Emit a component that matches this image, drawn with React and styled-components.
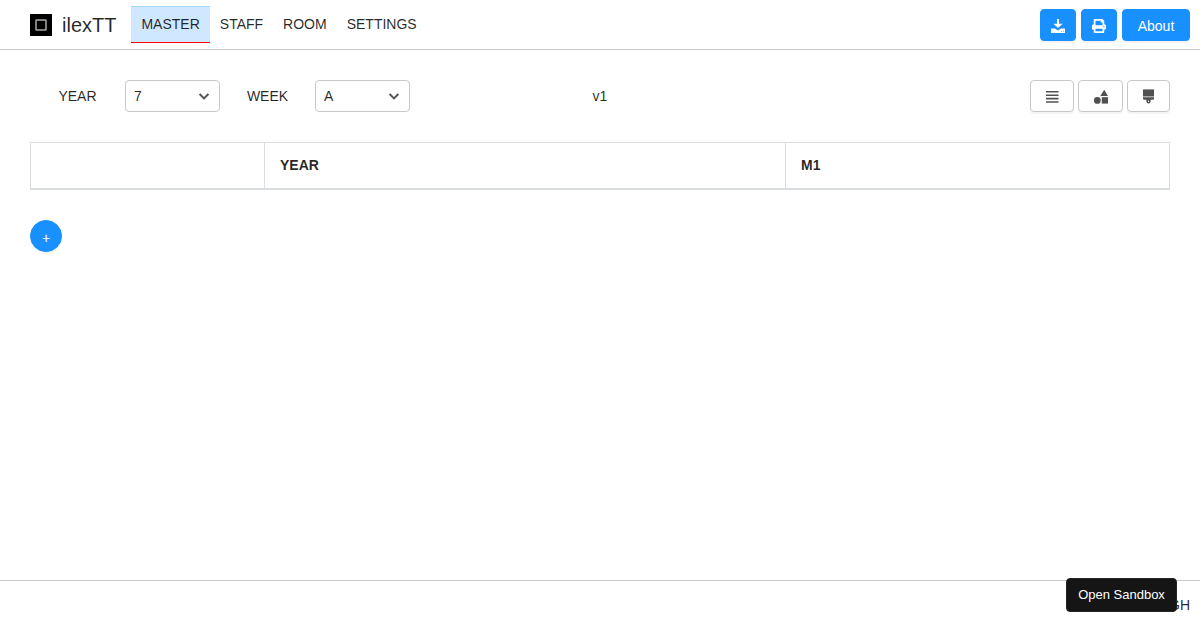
import React, { useState } from "react";
import styled, { createGlobalStyle } from "styled-components";
import { FaPrint } from "react-icons/fa";

const GlobalStyle = createGlobalStyle`
	*,
	*::before,
	*::after {
		box-sizing: border-box;
	}

	:root {
		--blue: #1890ff;
		--text: rgba(0, 0, 0, 0.85);
		--border: #c8c8c8;
		--tableBorder: #d9dddf;
		--icon: #515151;
	}

	body {
		margin: 0;
		color: var(--text);
		background-color: #fff;
		font-family: "Liberation Sans", Arial, sans-serif;
		font-size: 14px;
		line-height: 20px;
	}

	button,
	select {
		font: inherit;
	}
`;

const Page = styled.div`
	min-height: 100vh;
	display: flex;
	flex-direction: column;
`;

const Header = styled.header`
	padding: 0 10px 0 30px;
	height: 50px;
	display: flex;
	align-items: center;
	border-bottom: 1px solid var(--border);
`;

const Brand = styled.a`
	margin-right: 15px;
	display: flex;
	align-items: center;
	gap: 10px;
	font-size: 20px;
	color: inherit;
	text-decoration: none;
`;

const Nav = styled.nav`
	display: flex;
`;

const NavLink = styled.a`
	padding: 7px 10px 8px;
	border-style: solid;
	border-width: 1px 0;
	border-color: ${({ $active }) => ($active ? "#a3d9ff transparent red" : "transparent")};
	background-color: ${({ $active }) => ($active ? "#d0e8ff" : "transparent")};
	background-clip: padding-box;
	color: inherit;
	text-decoration: none;
`;

const Actions = styled.div`
	margin-left: auto;
	display: flex;
	gap: ${({ $gap }) => $gap}px;
`;

const Button = styled.button`
	padding: 2px 0 0;
	width: ${({ $width }) => $width}px;
	height: 32px;
	display: flex;
	align-items: center;
	justify-content: center;
	border: 1px solid ${({ $primary }) => ($primary ? "var(--blue)" : "var(--border)")};
	border-radius: 4px;
	background-color: ${({ $primary }) => ($primary ? "var(--blue)" : "#fff")};
	box-shadow: 0 2px 0 rgba(0, 0, 0, 0.045);
	color: ${({ $primary }) => ($primary ? "#fff" : "var(--icon)")};
	cursor: pointer;
`;

const RoundButton = styled(Button)`
	padding-top: 4px;
	border-radius: 50%;
`;

const Main = styled.main`
	padding: 30px;
	flex: 1;
	display: flex;
	flex-direction: column;
	gap: 30px;
`;

const Toolbar = styled.div`
	display: grid;
	grid-template-columns: 1fr auto 1fr;
	align-items: center;
`;

const Filters = styled.div`
	display: flex;
	align-items: center;
`;

const Label = styled.label`
	width: 95px;
	text-align: center;
`;

const SelectBox = styled.div`
	width: 95px;
	display: grid;
	align-items: center;

	> * {
		grid-area: 1 / 1;
	}

	svg {
		margin-right: 9px;
		justify-self: end;
		pointer-events: none;
	}
`;

const Select = styled.select`
	padding: 0 8px;
	width: 100%;
	height: 32px;
	appearance: none;
	border: 1px solid var(--border);
	border-radius: 4px;
	background-color: #fff;
	color: inherit;
`;

const Table = styled.table`
	width: 100%;
	table-layout: fixed;
	border-collapse: collapse;
	border: 1px solid var(--tableBorder);

	th {
		padding: 12px 15px 13px;
		height: 46px;
		border: 1px solid var(--tableBorder);
		border-bottom-width: 2px;
		text-align: left;
	}

	th:first-child {
		width: 234px;
	}

	th:last-child {
		width: 384px;
	}
`;

const Footer = styled.footer`
	padding: 0 10px 2px;
	height: 50px;
	display: flex;
	align-items: center;
	justify-content: flex-end;
	border-top: 1px solid var(--border);
`;

const SandboxButton = styled.button`
	position: fixed;
	right: 23px;
	bottom: 18px;
	padding: 0;
	width: 111px;
	height: 34px;
	border: 1px solid #252525;
	border-radius: 4px;
	background-color: #151515;
	color: #fff;
	font-size: 13px;
	cursor: pointer;
`;

const Logo = () => (
	<svg width={22} height={22} viewBox="0 0 22 22" aria-hidden="true">
		<rect width={22} height={22} />
		<rect x={6} y={6} width={10} height={10} rx={0.5} fill="none" stroke="#aaa" strokeWidth={1.5} />
	</svg>
);

const Chevron = () => (
	<svg width={14} height={14} viewBox="0 0 14 14" aria-hidden="true">
		<path d="M2.6 5 7 9.4 11.4 5" fill="none" stroke="#555" strokeWidth={2} />
	</svg>
);

const DownloadIcon = () => (
	<svg width={16} height={16} viewBox="0 0 16 16" fill="currentColor" aria-hidden="true">
		<path d="M7 1h2v4.8h3.6L8 10 3.4 5.8H7z" />
		<path fillRule="evenodd" d="M1 10.6h4L8 12.6l3-2h4V15H1zM11.3 13v.7h.7V13zm1.7 0v.7h.7V13z" />
	</svg>
);

const LinesIcon = () => (
	<svg width={16} height={16} viewBox="0 0 16 16" fill="currentColor" aria-hidden="true">
		<path d="M2 2h12.5v1.6H2zM2 5.4h12.5V7H2zM2 8.8h12.5v1.6H2zM2 12.2h12.5v1.6H2z" />
	</svg>
);

const ShapesIcon = () => (
	<svg width={17} height={16} viewBox="0 0 17 16" fill="currentColor" aria-hidden="true">
		<path d="M12.2.8 16 7H8.3z" />
		<circle cx={5.3} cy={11.4} r={3.4} />
		<path d="M9.8 8.2H16v6.4H9.8z" />
	</svg>
);

const BrushIcon = () => (
	<svg width={15} height={16} viewBox="0 0 15 16" fill="currentColor" aria-hidden="true">
		<path d="M2 .4h11v6.8H2z" />
		<path d="M2 7.2h11v1H2z" opacity={0.45} />
		<path
			fillRule="evenodd"
			d="M2 8.2h11v1.2c0 .9-.6 1.4-1.5 1.4H9.6v1.7a2.1 2.1 0 0 1-4.2 0v-1.7H3.5c-.9 0-1.5-.5-1.5-1.4zM7 11.8v1.1h1v-1.1z"
		/>
	</svg>
);

const NAV_ITEMS = ["MASTER", "STAFF", "ROOM", "SETTINGS"];

const Filter = ({ id, label, options }) => {
	const [value, setValue] = useState(options[0]);

	return (
		<>
			<Label htmlFor={id}>{label}</Label>
			<SelectBox>
				<Select id={id} value={value} onChange={(e) => setValue(e.target.value)}>
					{options.map((option) => (
						<option key={option}>{option}</option>
					))}
				</Select>
				<Chevron />
			</SelectBox>
		</>
	);
};

const App = () => {
	const [active, setActive] = useState("MASTER");

	return (
		<Page>
			<GlobalStyle />
			<Header>
				<Brand href="#">
					<Logo />
					ilexTT
				</Brand>
				<Nav>
					{NAV_ITEMS.map((item) => (
						<NavLink
							key={item}
							href={`#${item.toLowerCase()}`}
							$active={item === active}
							onClick={() => setActive(item)}
						>
							{item}
						</NavLink>
					))}
				</Nav>
				<Actions $gap={5}>
					<Button $primary $width={36} aria-label="Download">
						<DownloadIcon />
					</Button>
					<Button $primary $width={36} aria-label="Print">
						<FaPrint size={14} />
					</Button>
					<Button $primary $width={68}>
						About
					</Button>
				</Actions>
			</Header>

			<Main>
				<Toolbar>
					<Filters>
						<Filter id="year" label="YEAR" options={["7", "8", "9", "10", "11"]} />
						<Filter id="week" label="WEEK" options={["A", "B"]} />
					</Filters>
					<span>v1</span>
					<Actions $gap={4}>
						<Button $width={44} aria-label="Rows">
							<LinesIcon />
						</Button>
						<Button $width={45} aria-label="Shapes">
							<ShapesIcon />
						</Button>
						<Button $width={43} aria-label="Colours">
							<BrushIcon />
						</Button>
					</Actions>
				</Toolbar>

				<Table>
					<thead>
						<tr>
							<th />
							<th scope="col">YEAR</th>
							<th scope="col">M1</th>
						</tr>
					</thead>
				</Table>

				<RoundButton $primary $width={32} aria-label="Add row">
					+
				</RoundButton>
			</Main>

			<Footer>GH</Footer>
			<SandboxButton>Open Sandbox</SandboxButton>
		</Page>
	);
};

export default App;
